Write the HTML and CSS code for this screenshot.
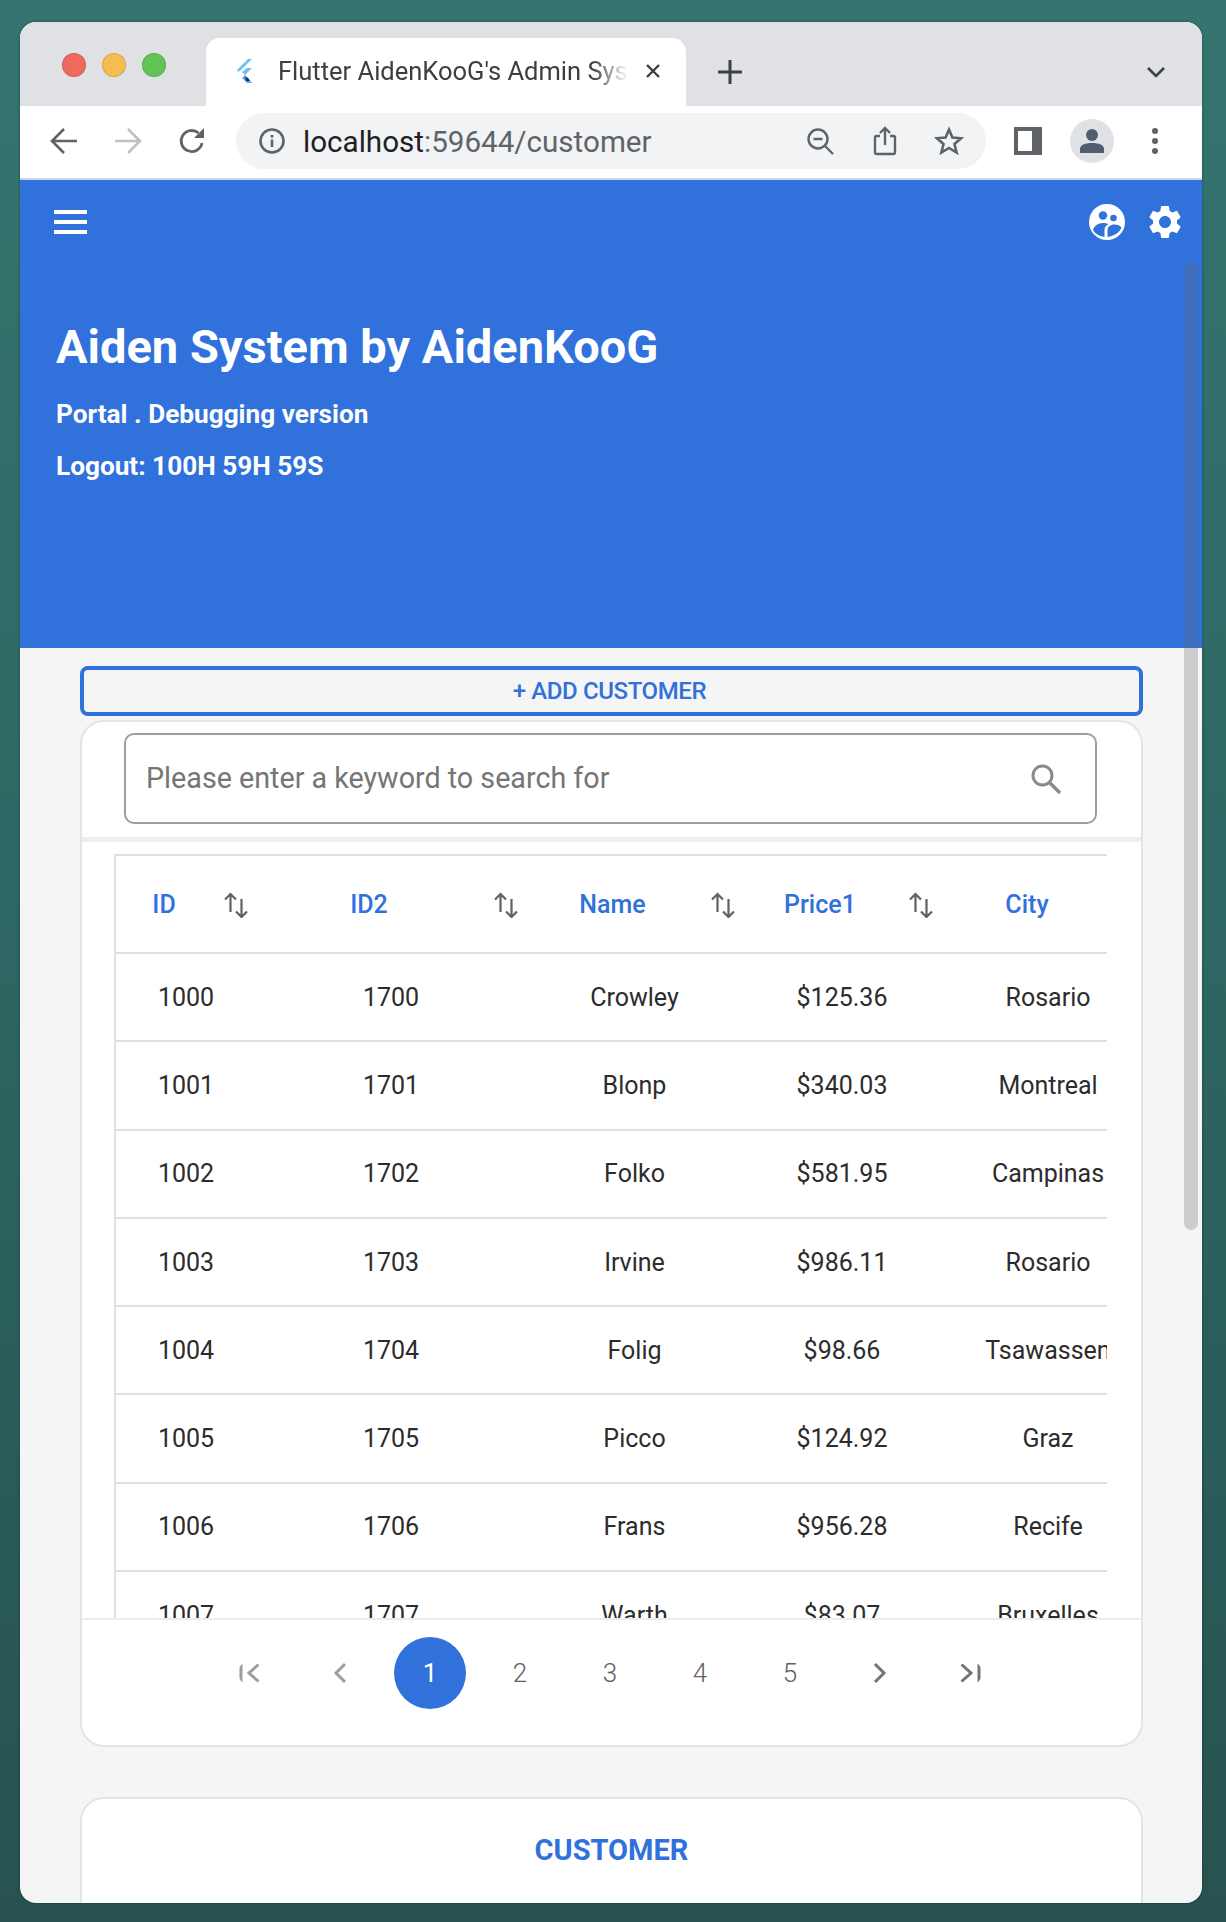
FILE: index.html
```html
<!DOCTYPE html>
<html lang="en">
<head>
    <meta charset="UTF-8">
    <meta name="viewport" content="width=device-width, initial-scale=1.0">
    <title>Flutter AidenKooG's Admin System</title>
    <link rel="stylesheet" href="styles.css">
</head>
<body>
<div class="window">

    <!-- Tab strip -->
    <div class="tabStrip">
        <div class="lights">
            <span class="light red"></span>
            <span class="light yellow"></span>
            <span class="light green"></span>
        </div>
        <div class="tab">
            <svg class="favicon" viewBox="0 0 18 24" width="18" height="24">
                <polygon points="11,0 15,0 4,11 1,13 0,11" fill="#6cc0f5"/>
                <polygon points="10,9 15,9 8,16 5,13" fill="#6cc0f5"/>
                <polygon points="8,16 11,19 15,24 10,24 5,19" fill="#58a8e6"/>
                <polygon points="8,18 11,19 13,22 9,22" fill="#0b2a7a"/>
            </svg>
            <span class="tabTitle">Flutter AidenKooG's Admin System</span>
            <svg class="tabClose" viewBox="0 0 16 16" width="16" height="16">
                <path d="M2 2L14 14M14 2L2 14" stroke="#3c4043" stroke-width="2.4" fill="none"/>
            </svg>
        </div>
        <svg class="newTab" viewBox="0 0 24 24" width="24" height="24">
            <path d="M12 1V23M1 12H23" stroke="#3c4043" stroke-width="3" stroke-linecap="round" fill="none"/>
        </svg>
        <svg class="tabMenu" viewBox="0 0 20 12" width="20" height="12">
            <path d="M2 2L10 10L18 2" stroke="#3c4043" stroke-width="2.6" fill="none"/>
        </svg>
    </div>

    <!-- Toolbar -->
    <div class="toolbar">
        <svg class="navIcon" viewBox="0 0 28 28" width="28" height="28">
            <path d="M27 14H3M14 2L2 14L14 26" stroke="#5f6368" stroke-width="2.6" fill="none"/>
        </svg>
        <svg class="navIcon" viewBox="0 0 28 28" width="28" height="28">
            <path d="M1 14H25M14 2L26 14L14 26" stroke="#bdc1c6" stroke-width="2.6" fill="none"/>
        </svg>
        <svg class="navIcon" viewBox="0 0 28 28" width="28" height="28">
            <path d="M24 16A10.5 10.5 0 1 1 20.5 6" stroke="#5f6368" stroke-width="2.8" fill="none"/>
            <polygon points="16,11 26,11 26,1" fill="#5f6368"/>
        </svg>
        <div class="omnibox">
            <svg class="infoIcon" viewBox="0 0 28 28" width="28" height="28">
                <circle cx="14" cy="14" r="11.5" stroke="#5f6368" stroke-width="2.6" fill="none"/>
                <rect x="12.7" y="12.5" width="2.6" height="7.5" fill="#5f6368"/>
                <rect x="12.7" y="8" width="2.6" height="2.6" fill="#5f6368"/>
            </svg>
            <span class="url"><span class="urlHost">localhost</span>:59644/customer</span>
            <svg class="boxIcon zoomIcon" viewBox="0 0 28 28" width="28" height="28">
                <circle cx="12" cy="12" r="9.5" stroke="#5f6368" stroke-width="2.4" fill="none"/>
                <path d="M7.5 12H16.5M19 19L27 27" stroke="#5f6368" stroke-width="2.4" fill="none"/>
            </svg>
            <svg class="boxIcon shareIcon" viewBox="0 0 24 30" width="24" height="30">
                <path d="M7 10H3.5A1.5 1.5 0 0 0 2 11.5V26.5A1.5 1.5 0 0 0 3.5 28H20.5A1.5 1.5 0 0 0 22 26.5V11.5A1.5 1.5 0 0 0 20.5 10H17" stroke="#5f6368" stroke-width="2.4" fill="none"/>
                <path d="M12 19V2M7 7L12 2L17 7" stroke="#5f6368" stroke-width="2.4" fill="none"/>
            </svg>
            <svg class="boxIcon starIcon" viewBox="0 0 30 30" width="30" height="30">
                <polygon points="15,3.5 18.4,11.6 27.2,12.3 20.5,18 22.6,26.6 15,22 7.4,26.6 9.5,18 2.8,12.3 11.6,11.6" stroke="#5f6368" stroke-width="2.6" fill="none"/>
            </svg>
        </div>
        <div class="sidePanel"><span class="sidePanelInner"></span></div>
        <div class="avatar">
            <svg viewBox="0 0 26 26" width="26" height="26">
                <circle cx="13" cy="7" r="6" fill="#535d70"/>
                <path d="M1 25V21C1 17 6 15 13 15C20 15 25 17 25 21V25Z" fill="#535d70"/>
            </svg>
        </div>
        <div class="dots"><span></span><span></span><span></span></div>
    </div>

    <!-- Page -->
    <div class="page">
        <div class="scrollThumb"></div>

        <header class="hero">
            <div class="appBar">
                <div class="menuIcon"><span></span><span></span><span></span></div>
                <div class="appActions">
                    <svg viewBox="0 0 36 36" width="36" height="36">
                        <circle cx="18" cy="18" r="18" fill="#fff"/>
                        <circle cx="14" cy="11.5" r="4.2" fill="#3071dc"/>
                        <circle cx="24.5" cy="14" r="3.3" fill="#3071dc"/>
                        <path d="M4 26C5 22 9 19 14 19C16 19 18 19.5 19.5 20.3C17 21.5 15.5 23.5 15.5 26V33C10 32.2 6 29.5 4 26Z" fill="#3071dc"/>
                        <path d="M18.5 26C18.5 22.8 21.5 20.5 25.5 20.5C28.5 20.5 31 21.5 32.5 23.5C30.5 28.5 25.5 32 18.5 33Z" fill="#3071dc"/>
                    </svg>
                    <svg viewBox="0 0 24 24" width="40" height="40">
                        <path fill="#fff" d="M19.14 12.94c.04-.3.06-.61.06-.94 0-.32-.02-.64-.07-.94l2.03-1.58a.49.49 0 0 0 .12-.61l-1.92-3.32a.488.488 0 0 0-.59-.22l-2.39.96c-.5-.38-1.03-.7-1.62-.94l-.36-2.54a.484.484 0 0 0-.48-.41h-3.84c-.24 0-.43.17-.47.41l-.36 2.54c-.59.24-1.13.57-1.62.94l-2.39-.96c-.22-.08-.47 0-.59.22L2.74 8.87c-.12.21-.08.47.12.61l2.03 1.58c-.05.3-.09.63-.09.94s.02.64.07.94l-2.03 1.58a.49.49 0 0 0-.12.61l1.92 3.32c.12.22.37.29.59.22l2.39-.96c.5.38 1.03.7 1.62.94l.36 2.54c.05.24.24.41.48.41h3.84c.24 0 .44-.17.47-.41l.36-2.54c.59-.24 1.13-.56 1.62-.94l2.39.96c.22.08.47 0 .59-.22l1.92-3.32c.12-.22.07-.47-.12-.61l-2.01-1.58zM12 15.6c-1.98 0-3.6-1.62-3.6-3.6s1.62-3.6 3.6-3.6 3.6 1.62 3.6 3.6-1.62 3.6-3.6 3.6z"/>
                    </svg>
                </div>
            </div>
            <h1 class="heroTitle">Aiden System by AidenKooG</h1>
            <p class="heroLine">Portal . Debugging version</p>
            <p class="heroLine">Logout: 100H 59H 59S</p>
        </header>

        <div class="content">
            <button class="addButton">+ ADD CUSTOMER</button>

            <section class="card tableCard">
                <div class="searchRow">
                    <div class="searchBox">
                        <span class="searchHint">Please enter a keyword to search for</span>
                        <svg viewBox="0 0 32 32" width="32" height="32">
                            <circle cx="12.5" cy="12.5" r="9.5" stroke="#8a8a8a" stroke-width="3" fill="none"/>
                            <path d="M19.5 19.5L30 30" stroke="#8a8a8a" stroke-width="3.4" fill="none"/>
                        </svg>
                    </div>
                </div>

                <div class="tableWrap">
                    <div class="grid">
                        <div class="gridRow headRow">
                            <div class="headCell"><span>ID</span><svg class="sortIcon" viewBox="0 0 26 26" width="26" height="26"><use href="#sort"/></svg></div>
                            <div class="headCell"><span>ID2</span><svg class="sortIcon" viewBox="0 0 26 26" width="26" height="26"><use href="#sort"/></svg></div>
                            <div class="headCell"><span>Name</span><svg class="sortIcon" viewBox="0 0 26 26" width="26" height="26"><use href="#sort"/></svg></div>
                            <div class="headCell"><span>Price1</span><svg class="sortIcon" viewBox="0 0 26 26" width="26" height="26"><use href="#sort"/></svg></div>
                            <div class="headCell lastHead"><span>City</span></div>
                        </div>
                        <div class="gridRow"><div>1000</div><div>1700</div><div>Crowley</div><div>$125.36</div><div>Rosario</div></div>
                        <div class="gridRow"><div>1001</div><div>1701</div><div>Blonp</div><div>$340.03</div><div>Montreal</div></div>
                        <div class="gridRow"><div>1002</div><div>1702</div><div>Folko</div><div>$581.95</div><div>Campinas</div></div>
                        <div class="gridRow"><div>1003</div><div>1703</div><div>Irvine</div><div>$986.11</div><div>Rosario</div></div>
                        <div class="gridRow"><div>1004</div><div>1704</div><div>Folig</div><div>$98.66</div><div>Tsawassen</div></div>
                        <div class="gridRow"><div>1005</div><div>1705</div><div>Picco</div><div>$124.92</div><div>Graz</div></div>
                        <div class="gridRow"><div>1006</div><div>1706</div><div>Frans</div><div>$956.28</div><div>Recife</div></div>
                        <div class="gridRow"><div>1007</div><div>1707</div><div>Warth</div><div>$83.07</div><div>Bruxelles</div></div>
                    </div>
                </div>

                <div class="pager">
                    <svg class="pageItem" viewBox="0 0 24 24" width="24" height="24"><path d="M3 2V22" stroke="#9e9e9e" stroke-width="3" fill="none"/><path d="M21 3L11 12L21 21" stroke="#9e9e9e" stroke-width="3" fill="none"/></svg>
                    <svg class="pageItem" viewBox="0 0 24 24" width="24" height="24"><path d="M17 3L8 12L17 21" stroke="#9e9e9e" stroke-width="3" fill="none"/></svg>
                    <span class="pageItem current">1</span>
                    <span class="pageItem">2</span>
                    <span class="pageItem">3</span>
                    <span class="pageItem">4</span>
                    <span class="pageItem">5</span>
                    <svg class="pageItem" viewBox="0 0 24 24" width="24" height="24"><path d="M7 3L16 12L7 21" stroke="#757575" stroke-width="3" fill="none"/></svg>
                    <svg class="pageItem" viewBox="0 0 24 24" width="24" height="24"><path d="M3 3L13 12L3 21" stroke="#757575" stroke-width="3" fill="none"/><path d="M21 2V22" stroke="#757575" stroke-width="3" fill="none"/></svg>
                </div>
            </section>

            <section class="card titleCard">
                <h2>CUSTOMER</h2>
            </section>
        </div>
    </div>
</div>

<svg class="defs" width="0" height="0">
    <symbol id="sort" viewBox="0 0 26 26">
        <path d="M7.5 20V2M2 7.5L7.5 2L13 7.5" stroke="#616161" stroke-width="2.2" fill="none"/>
        <path d="M18.5 7V25M13 19.5L18.5 25L24 19.5" stroke="#616161" stroke-width="2.2" fill="none"/>
    </symbol>
</svg>
</body>
</html>
```

FILE: styles.css
```css
* {
    box-sizing: border-box;
}

html, body {
    margin: 0;
    height: 100%;
}

body {
    font-family: Roboto, "Liberation Sans", sans-serif;
    background: linear-gradient(to bottom, #35756f, #2d6662 50%, #27524f);
    padding: 22px 24px 19px 20px;
    overflow: hidden;
}

.window {
    height: 1881px;
    border-radius: 16px;
    overflow: hidden;
    background: #f5f5f5;
    display: flex;
    flex-direction: column;
    box-shadow: 0 0 3px rgba(0, 0, 0, 0.35);
}

/* tab strip */
.tabStrip {
    height: 84px;
    flex: none;
    background: #dfe1e5;
    display: flex;
    align-items: flex-start;
}

.lights {
    display: flex;
    gap: 16px;
    padding: 31px 0 0 42px;
    width: 186px;
}

.light {
    width: 24px;
    height: 24px;
    border-radius: 50%;
    border: 1px solid rgba(0, 0, 0, 0.12);
}

.red { background: #ee6a5f; }
.yellow { background: #f5bd4f; }
.green { background: #61c454; }

.tab {
    width: 480px;
    height: 68px;
    margin-top: 16px;
    background: #fff;
    border-radius: 14px 14px 0 0;
    display: flex;
    align-items: center;
    padding: 0 0 2px 31px;
}

.favicon {
    flex: none;
    margin-right: 23px;
}

.tabTitle {
    width: 350px;
    font-size: 25.5px;
    color: #3c4043;
    white-space: nowrap;
    overflow: hidden;
    -webkit-mask-image: linear-gradient(to right, #000 90%, transparent);
    mask-image: linear-gradient(to right, #000 90%, transparent);
}

.tabClose {
    flex: none;
    margin-left: 17px;
}

.newTab {
    margin: 38px 0 0 32px;
}

.tabMenu {
    margin: 44px 0 0 404px;
}

/* toolbar */
.toolbar {
    height: 74px;
    flex: none;
    background: #fff;
    border-bottom: 2px solid #d0d3d7;
    display: flex;
    align-items: center;
    padding: 0 0 2px 30px;
}

.navIcon {
    flex: none;
    margin-right: 36px;
}

.omnibox {
    width: 750px;
    height: 56px;
    margin-left: -6px;
    background: #f1f3f4;
    border-radius: 28px;
    display: flex;
    align-items: center;
    padding-left: 22px;
}

.infoIcon {
    flex: none;
}

.url {
    margin-left: 17px;
    width: 384px;
    font-size: 29.6px;
    line-height: 36px;
    padding-top: 1px;
    color: #5f6368;
    white-space: nowrap;
}

.urlHost {
    color: #202124;
}

.zoomIcon {
    margin-left: 119px;
}

.shareIcon {
    margin-left: 39px;
}

.starIcon {
    margin-left: 37px;
}

.sidePanel {
    width: 28px;
    height: 28px;
    margin-left: 28px;
    background: #5f6368;
    padding: 4px 10px 4px 4px;
}

.sidePanelInner {
    display: block;
    height: 100%;
    background: #fff;
}

.avatar {
    width: 44px;
    height: 44px;
    margin-left: 28px;
    border-radius: 50%;
    background: #dfe1e5;
    display: flex;
    align-items: center;
    justify-content: center;
}

.dots {
    margin-left: 38px;
    display: flex;
    flex-direction: column;
    gap: 4px;
}

.dots span {
    width: 6px;
    height: 6px;
    border-radius: 50%;
    background: #5f6368;
}

/* page */
.page {
    flex: 1;
    position: relative;
    overflow: hidden;
}

.scrollThumb {
    position: absolute;
    top: 83px;
    right: 4px;
    width: 14px;
    height: 967px;
    border-radius: 7px;
    background: rgba(100, 100, 100, 0.27);
}

.hero {
    height: 468px;
    background: #3071dc;
    color: #fff;
    padding: 30px 0 0 36px;
}

.appBar {
    display: flex;
    justify-content: space-between;
    align-items: center;
    height: 24px;
    padding-right: 17px;
}

.menuIcon {
    width: 33px;
    display: flex;
    flex-direction: column;
    gap: 6px;
    margin-left: -2px;
}

.menuIcon span {
    height: 4px;
    background: #fff;
}

.appActions {
    display: flex;
    align-items: center;
    gap: 20px;
}

.heroTitle {
    margin: 88px 0 0;
    padding-bottom: 5px;
    font-size: 47px;
    line-height: 50px;
    font-weight: 700;
}

.heroLine {
    margin: 22px 0 0;
    font-size: 26.2px;
    line-height: 30px;
    font-weight: 700;
}

.content {
    padding: 18px 59px 0 60px;
}

.addButton {
    display: block;
    width: 100%;
    height: 50px;
    background: #f5f5f5;
    border: 4px solid #3071dc;
    border-radius: 8px;
    color: #3071dc;
    font-family: inherit;
    font-size: 24px;
    letter-spacing: -0.4px;
    font-weight: 500;
    padding: 0 4px 0 0;
}

.card {
    background: #fff;
    border: 2px solid #e4e4e4;
    border-radius: 24px;
}

.tableCard {
    margin-top: 4px;
    height: 1027px;
    display: flex;
    flex-direction: column;
    overflow: hidden;
}

.searchRow {
    flex: none;
    height: 120px;
    padding: 11px 44px 0 42px;
    border-bottom: 5px solid #eee;
}

.searchBox {
    height: 91px;
    border: 2px solid #9e9e9e;
    border-radius: 10px;
    display: flex;
    align-items: center;
    justify-content: space-between;
    padding: 0 33px 0 20px;
}

.searchHint {
    font-size: 28.7px;
    color: #757575;
    margin-top: -2px;
}

.tableWrap {
    flex: none;
    height: 778px;
    padding: 12px 34px 0 32px;
    overflow: hidden;
    border-bottom: 2px solid #ececec;
}

.grid {
    border-top: 2px solid #e0e0e0;
    border-left: 2px solid #e0e0e0;
    overflow: hidden;
}

.gridRow {
    display: grid;
    grid-template-columns: 140px 270px 217px 198px 214px;
    height: 88.3px;
    align-items: center;
    text-align: center;
    border-bottom: 2px solid #e0e0e0;
    font-size: 25px;
    color: #2c2c2c;
    white-space: nowrap;
}

.headRow {
    height: 98px;
    font-weight: 500;
    color: #3071dc;
}

.headCell {
    display: flex;
    align-items: center;
}

.headCell span {
    flex: 1;
    padding-left: 2px;
}

.sortIcon {
    flex: none;
    margin: 2px 7px 0 13px;
}

.lastHead {
    padding-right: 44px;
}

.pager {
    flex: 1;
    display: flex;
    gap: 18px;
    align-items: flex-start;
    justify-content: center;
    padding-top: 17px;
    padding-right: 3px;
    font-size: 26px;
    font-weight: 300;
    color: #616161;
}

.pageItem {
    width: 72px;
    height: 72px;
    display: flex;
    align-items: center;
    justify-content: center;
    border-radius: 50%;
    padding: 24px;
}

.current {
    background: #3071dc;
    color: #fff;
    font-weight: 400;
}

.titleCard {
    margin-top: 50px;
    height: 200px;
    text-align: center;
}

.titleCard h2 {
    margin: 34px 0 0;
    font-size: 29px;
    line-height: 34px;
    font-weight: 700;
    color: #3071dc;
}

.defs {
    position: absolute;
}
```
